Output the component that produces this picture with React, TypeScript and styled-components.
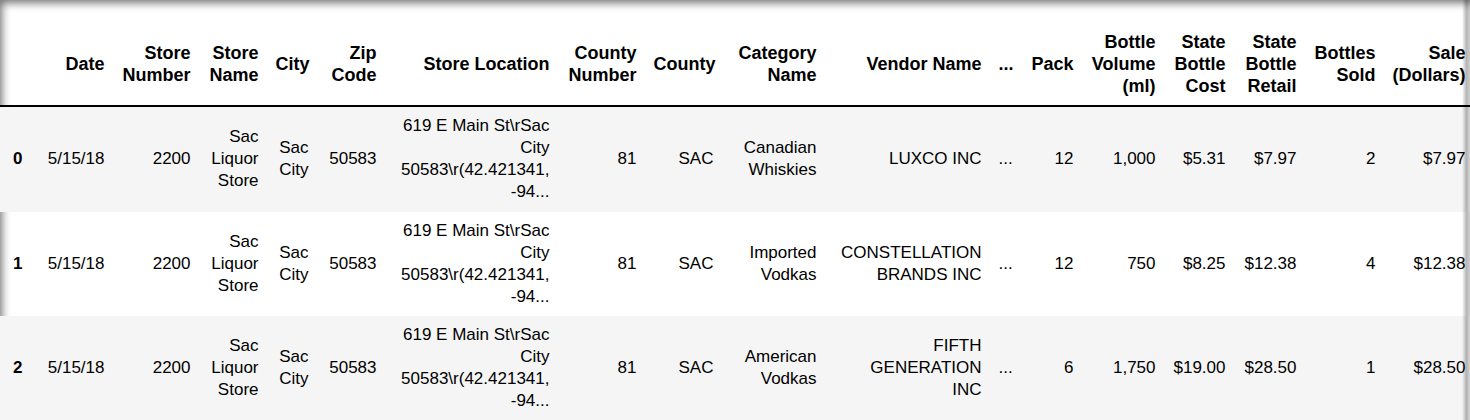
import styled, { createGlobalStyle } from 'styled-components';

const GlobalStyle = createGlobalStyle`
  html, body {
    margin: 0;
    padding: 0;
    background: #ffffff;
  }
  body {
    font-family: "Liberation Sans", Arial, Helvetica, sans-serif;
  }
`;

const Frame = styled.div`
  position: relative;
  width: 1470px;
  height: 420px;
  box-sizing: border-box;
  padding-top: 23px;
  overflow: hidden;
  background: #ffffff;
  box-shadow: inset 3px 4px 8px -1px rgba(0, 0, 0, 0.55);

  &::after {
    content: '';
    position: absolute;
    top: 0;
    right: 0;
    bottom: 0;
    width: 8px;
    pointer-events: none;
    background: linear-gradient(
      to right,
      rgba(0, 0, 0, 0) 0%,
      rgba(0, 0, 0, 0.28) 55%,
      rgba(0, 0, 0, 0.12) 100%
    );
  }
`;

const Table = styled.table`
  border-collapse: collapse;
  border-spacing: 0;
  table-layout: fixed;
  width: 1474px;
  line-height: 22px;
  color: #000000;
`;

const HeadRow = styled.tr`
  border-bottom: 2px solid #000000;
`;

const Th = styled.th<{ $head?: boolean }>`
  padding: ${(p) => (p.$head ? '8px 8.5px' : '8.25px 8.5px')};
  font-size: ${(p) => (p.$head ? '18px' : '17px')};
  text-align: right;
  vertical-align: middle;
  font-weight: bold;
  white-space: nowrap;
`;

const BodyRow = styled.tr<{ $striped: boolean }>`
  background: ${(p) => (p.$striped ? '#f5f5f5' : 'transparent')};
`;

const Td = styled.td`
  padding: 8.25px 8.5px;
  font-size: 17px;
  text-align: right;
  vertical-align: middle;
  white-space: nowrap;
`;

type Column = { width: number; header: string[] };

const columns: Column[] = [
  { width: 31, header: [] },
  { width: 82, header: ['Date'] },
  { width: 86, header: ['Store', 'Number'] },
  { width: 68, header: ['Store', 'Name'] },
  { width: 50, header: ['City'] },
  { width: 68, header: ['Zip', 'Code'] },
  { width: 173, header: ['Store Location'] },
  { width: 87, header: ['County', 'Number'] },
  { width: 77, header: ['County'] },
  { width: 103, header: ['Category', 'Name'] },
  { width: 165, header: ['Vendor Name'] },
  { width: 31, header: ['...'] },
  { width: 61, header: ['Pack'] },
  { width: 82, header: ['Bottle', 'Volume', '(ml)'] },
  { width: 70, header: ['State', 'Bottle', 'Cost'] },
  { width: 71, header: ['State', 'Bottle', 'Retail'] },
  { width: 79, header: ['Bottles', 'Sold'] },
  { width: 90, header: ['Sale', '(Dollars)'] },
];

const location = ['619 E Main St\\rSac', 'City', '50583\\r(42.421341,', '-94...'];
const store = ['Sac', 'Liquor', 'Store'];
const city = ['Sac', 'City'];

const rows: string[][][] = [
  [
    ['5/15/18'], ['2200'], store, city, ['50583'], location, ['81'], ['SAC'],
    ['Canadian', 'Whiskies'], ['LUXCO INC'], ['...'], ['12'], ['1,000'],
    ['$5.31'], ['$7.97'], ['2'], ['$7.97'],
  ],
  [
    ['5/15/18'], ['2200'], store, city, ['50583'], location, ['81'], ['SAC'],
    ['Imported', 'Vodkas'], ['CONSTELLATION', 'BRANDS INC'], ['...'], ['12'], ['750'],
    ['$8.25'], ['$12.38'], ['4'], ['$12.38'],
  ],
  [
    ['5/15/18'], ['2200'], store, city, ['50583'], location, ['81'], ['SAC'],
    ['American', 'Vodkas'], ['FIFTH', 'GENERATION', 'INC'], ['...'], ['6'], ['1,750'],
    ['$19.00'], ['$28.50'], ['1'], ['$28.50'],
  ],
];

function Lines({ lines }: { lines: string[] }) {
  return (
    <>
      {lines.map((line, i) => (
        <span key={i}>
          {i > 0 && <br />}
          {line}
        </span>
      ))}
    </>
  );
}

export default function App() {
  return (
    <>
      <GlobalStyle />
      <Frame>
        <Table>
          <colgroup>
            {columns.map((c, i) => (
              <col key={i} style={{ width: c.width }} />
            ))}
          </colgroup>
          <thead>
            <HeadRow>
              {columns.map((c, i) => (
                <Th key={i} $head>
                  <Lines lines={c.header} />
                </Th>
              ))}
            </HeadRow>
          </thead>
          <tbody>
            {rows.map((row, r) => (
              <BodyRow key={r} $striped={r % 2 === 0}>
                <Th>{r}</Th>
                {row.map((cell, i) => (
                  <Td key={i}>
                    <Lines lines={cell} />
                  </Td>
                ))}
              </BodyRow>
            ))}
          </tbody>
        </Table>
      </Frame>
    </>
  );
}
